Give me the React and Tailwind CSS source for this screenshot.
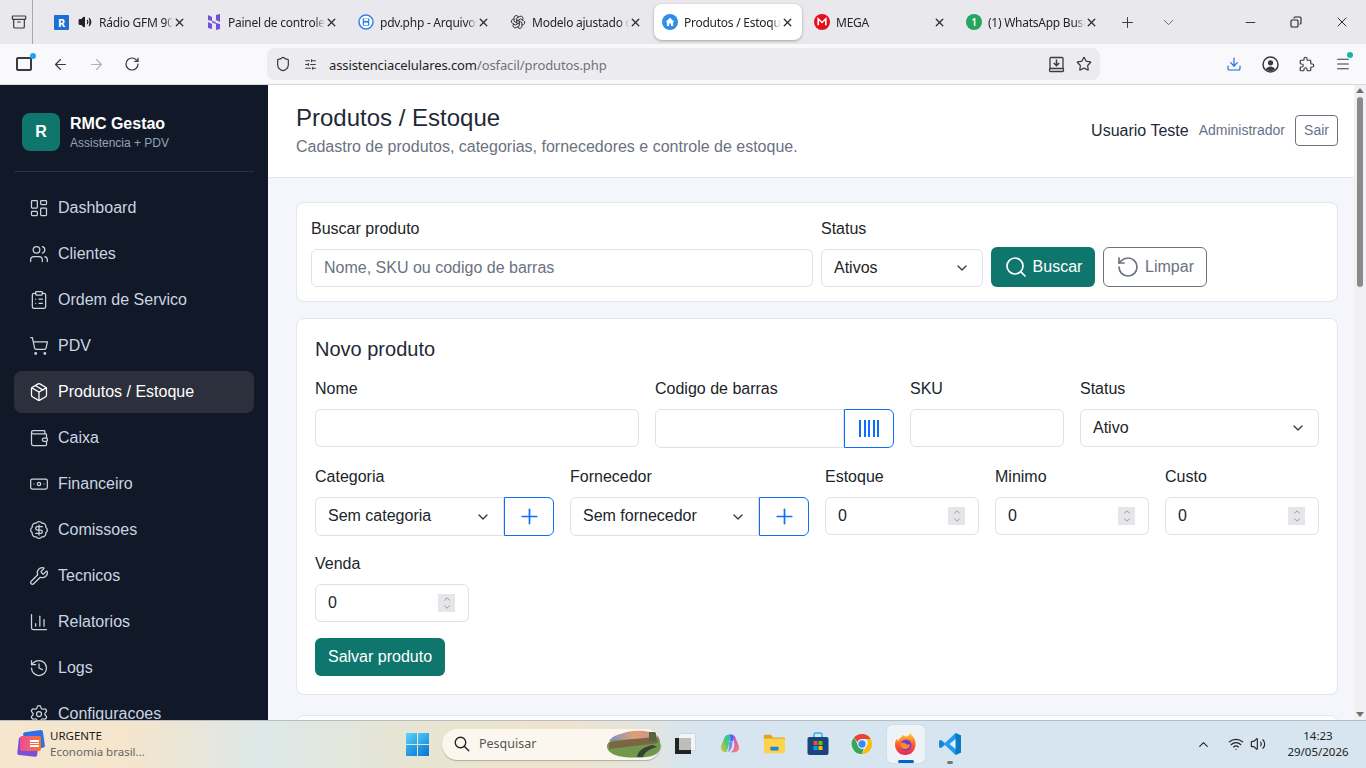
import React from "react";
import { TbChevronDown, TbChevronUp, TbSearch, TbPlus, TbX, TbMinus, TbBrandOpenai, TbPuzzle } from "react-icons/tb";
import { LayoutDashboard, Users, ClipboardList, ShoppingCart, Package, Wallet, Banknote, BadgeDollarSign, Wrench, ChartColumn, History, Settings, ArrowLeft, ArrowRight, RotateCw, Shield, Star, Download, SlidersHorizontal, Menu, Archive, Copy, Wifi, Volume2, ChevronUp, RotateCcw, Search } from "lucide-react";

const nav = [
  ["Dashboard", LayoutDashboard], ["Clientes", Users], ["Ordem de Servico", ClipboardList], ["PDV", ShoppingCart],
  ["Produtos / Estoque", Package, true], ["Caixa", Wallet], ["Financeiro", Banknote], ["Comissoes", BadgeDollarSign],
  ["Tecnicos", Wrench], ["Relatorios", ChartColumn], ["Logs", History], ["Configuracoes", Settings],
];

function RadioIcon() {
  return <div className="w-[15px] h-[15px] bg-[#1d6fd1] flex items-center justify-center text-white text-[11px] font-bold leading-none rounded-[1px]">R</div>;
}
function HostIcon() {
  return <svg width="16" height="16" viewBox="0 0 16 16"><path d="M2 1l4 2v4l-4-1zM10 1l4-1v8l-4-2zM2 8l4 2v5l-4-1zM10 9l4 1v5l-4 1z" fill="#6f52d9" /><path d="M6 6.5l4 1.5v2L6 9z" fill="#8e75e6" /></svg>;
}
function PdvIcon() {
  return <svg width="16" height="16" viewBox="0 0 16 16"><circle cx="8" cy="8" r="7" fill="#fff" stroke="#2f86ea" strokeWidth="1.5" /><rect x="4.7" y="4.3" width="6.6" height="7.4" rx="1" fill="#2f86ea" /><rect x="6" y="4.6" width="4" height="2.2" fill="#fff" /><rect x="6" y="8.6" width="4" height="2.6" fill="#fff" /></svg>;
}
function HomeIcon() {
  return <div className="w-4 h-4 rounded-full bg-[#2e8fe6] flex items-center justify-center"><svg width="10" height="10" viewBox="0 0 10 10"><path d="M5 .8L.6 5h1.3v4h2.2V6.4h1.8V9h2.2V5h1.3z" fill="#fff" /></svg></div>;
}
function MegaIcon() {
  return <svg width="16" height="16" viewBox="0 0 16 16"><circle cx="8" cy="8" r="8" fill="#e4101b" /><path d="M4.2 11.3V4.8l3.8 3.7 3.8-3.7v6.5" fill="none" stroke="#fff" strokeWidth="1.6" /></svg>;
}
function WaIcon() {
  return <div className="w-4 h-4 rounded-full bg-[#25a55f] flex items-center justify-center text-white text-[10px] font-semibold leading-none">1</div>;
}
function SaveToBook() {
  return (
    <svg width="17" height="17" viewBox="0 0 17 17" fill="none" stroke="#3b3b3f" strokeWidth="1.3">
      <path d="M2 13V2.500C2 2 2.500 1.500 3 1.500h11c.5 0 1 .5 1 1V13" />
      <rect x="1.500" y="12.500" width="14" height="3" rx="1" />
      <path d="M8.500 3.500v6M5.800 7l2.700 2.700L11.200 7" strokeWidth="1.500" />
    </svg>
  );
}
function Profile() {
  return (
    <svg width="17" height="17" viewBox="0 0 17 17">
      <circle cx="8.500" cy="8.500" r="7.500" fill="none" stroke="#3b3b3f" strokeWidth="1.500" />
      <circle cx="8.500" cy="6.800" r="2.600" fill="#3b3b3f" />
      <path d="M3.800 13.200c1-2 3-2.800 4.700-2.800s3.700.8 4.700 2.800c-1.200 1.100-2.900 1.800-4.700 1.800s-3.500-.7-4.700-1.800z" fill="#3b3b3f" />
    </svg>
  );
}

const tabs = [
  { icon: <RadioIcon />, speaker: true, text: "Rádio GFM 90.1" },
  { icon: <HostIcon />, text: "Painel de controle" },
  { icon: <PdvIcon />, text: "pdv.php - Arquivos" },
  { icon: <TbBrandOpenai size={16} className="text-[#333]" strokeWidth={1.5} />, text: "Modelo ajustado do" },
  { icon: <HomeIcon />, text: "Produtos / Estoque", active: true },
  { icon: <MegaIcon />, text: "MEGA" },
  { icon: <WaIcon />, text: "(1) WhatsApp Business" },
];

function Tab({ t }) {
  return (
    <div className={t.active ? "w-[148px] mr-[4px] h-9 rounded-[8px] bg-white shadow-[0_1px_3px_rgba(0,0,0,0.3)] flex items-center pl-[8px] pr-[8px] shrink-0" : "w-[152px] h-9 flex items-center pl-[8px] pr-[12px] shrink-0"}>
      <div className={t.speaker ? "flex items-center gap-[9px] w-[45px] shrink-0" : "w-[22px] shrink-0 flex items-center"}>
        {t.icon}
        {t.speaker && <Volume2 size={14} fill="#222" className="text-[#222]" />}
      </div>
      <span className="flex-1 min-w-0 overflow-hidden whitespace-nowrap pt-[1px] text-[12px] tracking-[-0.25px] text-[#26262a] [mask-image:linear-gradient(to_right,black_90%,transparent)]">{t.text}</span>
      <TbX size={13} strokeWidth={2.4} className="text-[#2a2a2e] shrink-0" />
    </div>
  );
}

function BrowserBar() {
  return (
    <div className="font-['Noto_Sans',sans-serif]">
      <div className="h-11 bg-[#e8e8ed] flex items-center">
        <div className="w-[32px] h-11 shrink-0 border-r border-r-[#a8a8ac] box-content flex items-center justify-center">
          <Archive size={16} strokeWidth={1.8} className="text-[#3b3b3f] ml-[6px]" />
        </div>
        <div className="w-[13px] shrink-0" />
        {tabs.map((t) => <Tab key={t.text} t={t} />)}
        <TbPlus size={17} strokeWidth={1.4} className="text-[#3b3b3f] ml-[9px]" />
        <TbChevronDown size={17} strokeWidth={1.2} className="text-[#55555a] ml-[24px]" />
        <div className="flex-1" />
        <TbMinus size={15} strokeWidth={1.4} className="text-[#222] mr-[32px]" />
        <Copy size={12} strokeWidth={2.2} className="text-[#222] mr-[32px] scale-x-[-1]" />
        <TbX size={16} strokeWidth={1.4} className="text-[#222] mr-[16px]" />
      </div>
      <div className="h-[41px] bg-[#f9f9fb] border-b border-b-[#d8d8dc] flex items-center">
        <div className="w-[16px] shrink-0" />
        <div className="relative w-[16px] h-[14px] border-2 border-[#3b3b3f] rounded-[2px] bg-[#f9f9fb] shrink-0">
          <span className="absolute -top-[6px] -right-[6px] w-[6px] h-[6px] rounded-full bg-[#1ea4f0]" />
        </div>
        <ArrowLeft size={17} strokeWidth={1.7} className="text-[#3b3b3f] ml-[20px]" />
        <ArrowRight size={17} strokeWidth={1.7} className="text-[#b4b4b8] ml-[19px]" />
        <RotateCw size={16} strokeWidth={1.8} className="text-[#3b3b3f] ml-[19px]" />
        <div className="ml-[127px] w-[833px] h-8 rounded-[8px] bg-[#ececf0] flex items-center">
          <Shield size={16} strokeWidth={1.8} className="text-[#3b3b3f] ml-2" />
          <SlidersHorizontal size={13} strokeWidth={1.8} className="text-[#3b3b3f] ml-[13px]" />
          <span className="ml-[12px] pt-[3px] text-[13px] tracking-[-0.1px] text-[#1f1f23]">assistenciacelulares.com<span className="text-[#71717a]">/osfacil/produtos.php</span></span>
          <div className="flex-1" />
          <span className="mr-[11px]"><SaveToBook /></span>
          <Star size={16} strokeWidth={1.8} className="text-[#3b3b3f] mr-2" />
        </div>
        <div className="flex-1" />
        <Download size={16} strokeWidth={1.8} className="text-[#1a6fe0] mr-[20px]" />
        <span className="mr-[19px]"><Profile /></span>
        <TbPuzzle size={18} strokeWidth={1.6} className="text-[#3b3b3f] mr-[19px]" />
        <div className="relative mr-[15px]">
          <Menu size={16} strokeWidth={1.6} className="text-[#3b3b3f]" />
          <span className="absolute -top-[4px] -right-[2px] w-[6px] h-[6px] rounded-full bg-[#14b8a6]" />
        </div>
      </div>
    </div>
  );
}

function Sidebar() {
  return (
    <aside className="w-[268px] shrink-0 bg-[#111827] px-[14px] overflow-hidden">
      <div className="flex items-center gap-[10px] pl-2 pt-7 pb-5 border-b border-b-[#2a3140]">
        <div className="w-[38px] h-[38px] rounded-[8px] bg-[#0f766e] flex items-center justify-center text-white text-[16px] font-bold">R</div>
        <div className="h-[38px] pt-[1px]">
          <div className="text-white font-bold text-[16px] leading-[20px]">RMC Gestao</div>
          <div className="text-[#94a3b8] text-[12px] leading-[19px]">Assistencia + PDV</div>
        </div>
      </div>
      <nav className="mt-[15px] flex flex-col gap-1">
        {nav.map(([label, Icon, active]) => (
          <div key={label} className={active ? "h-[42px] shrink-0 rounded-[8px] bg-[#2b303c] text-white flex items-center pl-[15px] gap-[9px] text-[16px]" : "h-[42px] shrink-0 rounded-[8px] text-[#cbd5e1] flex items-center pl-[15px] gap-[9px] text-[16px]"}>
            <Icon size={20} strokeWidth={1.5} />
            <span>{label}</span>
          </div>
        ))}
      </nav>
    </aside>
  );
}

const fieldCls = "w-full h-[38px] rounded-[6px] border border-[#dee2e6] bg-white px-3 text-[16px] text-[#212529] placeholder:text-[#6b7280] outline-none";

function Label({ children }) {
  return <div className="text-[16px] leading-[24px] mb-2 text-[#212529]">{children}</div>;
}
function Select({ value, cls = "h-[38px] rounded-[6px]" }) {
  return (
    <div className="relative w-full">
      <select defaultValue={value} className={`${cls} w-full border border-[#dee2e6] bg-white pl-3 pr-8 text-[16px] text-[#212529] appearance-none outline-none`}>
        <option>{value}</option>
      </select>
      <TbChevronDown size={16} strokeWidth={2} className="absolute right-[13px] top-1/2 -translate-y-1/2 text-[#343a40]" />
    </div>
  );
}
function NumberField() {
  return (
    <div className="relative">
      <input defaultValue="0" className={fieldCls} />
      <div className="absolute right-[14px] top-[10px] w-[17px] h-[18px] bg-[#e6e6ea] flex flex-col items-center justify-center text-[#8c8c90]">
        <TbChevronUp size={10} strokeWidth={2} className="-mb-[1px]" />
        <TbChevronDown size={10} strokeWidth={2} className="-mt-[1px]" />
      </div>
    </div>
  );
}
function AddGroup({ value }) {
  return (
    <div className="flex">
      <Select value={value} cls="h-[39px] pb-[2px] rounded-l-[6px]" />
      <button className="w-[50px] h-[39px] shrink-0 border border-[#0d6efd] rounded-r-[6px] bg-white flex items-center justify-center text-[#0d6efd]">
        <TbPlus size={25} strokeWidth={1.6} />
      </button>
    </div>
  );
}

function Main() {
  return (
    <main className="flex-1 bg-[#f4f6fb] overflow-hidden min-w-0">
      <header className="h-[93px] bg-white border-b border-b-[#e2e6ee] flex items-center justify-between pl-7 pr-4">
        <div className="pb-[2px]">
          <div className="text-[24px] leading-[32px] text-[#1f2937]">Produtos / Estoque</div>
          <div className="mt-[1px] text-[16px] leading-[24px] text-[#6b7280]">Cadastro de produtos, categorias, fornecedores e controle de estoque.</div>
        </div>
        <div className="flex items-center pb-[1px]">
          <span className="text-[16px] text-[#1f2937] mr-[10px]">Usuario Teste</span>
          <span className="text-[14px] text-[#64748b] mr-[10px]">Administrador</span>
          <button className="w-[43px] h-[31px] border border-[#6b7280] rounded-[4px] text-[14px] text-[#64748b] bg-white">Sair</button>
        </div>
      </header>
      <div className="pt-6 pl-7 pr-4 flex flex-col gap-4">
        <section className="bg-white border border-[#e2e6f0] rounded-[8px] px-[14px] pt-[14px] pb-[14px] flex items-end gap-2">
          <div className="w-[502px]">
            <Label>Buscar produto</Label>
            <input placeholder="Nome, SKU ou codigo de barras" className={fieldCls} />
          </div>
          <div className="w-[162px]">
            <Label>Status</Label>
            <Select value="Ativos" />
          </div>
          <button className="w-[104px] h-10 rounded-[6px] bg-[#0f766e] text-white text-[16px] flex items-center justify-center gap-[5px]">
            <Search size={24} strokeWidth={1.7} />
            Buscar
          </button>
          <button className="w-[104px] h-10 rounded-[6px] border border-[#6b7280] bg-white text-[#6b7280] text-[16px] flex items-center justify-center gap-[5px]">
            <RotateCcw size={24} strokeWidth={1.7} />
            Limpar
          </button>
        </section>

        <section className="bg-white border border-[#e2e6f0] rounded-[8px] p-[18px]">
          <div className="text-[20px] leading-[24px] text-[#1f2937] mb-4">Novo produto</div>
          <div className="grid grid-cols-12 gap-x-4 gap-y-4">
            <div className="col-span-4"><Label>Nome</Label><input className={fieldCls} /></div>
            <div className="col-span-3">
              <Label>Codigo de barras</Label>
              <div className="flex h-10 items-start">
                <input className="flex-1 min-w-0 h-[39px] rounded-l-[6px] border border-[#dee2e6] bg-white px-3 outline-none" />
                <button className="w-[50px] h-[39px] shrink-0 border border-[#0d6efd] rounded-r-[6px] bg-white flex items-center justify-center gap-[2.5px]">
                  <span className="w-[2px] h-[17px] bg-[#0d6efd]" /><span className="w-[2px] h-[17px] bg-[#0d6efd]" /><span className="w-[2px] h-[17px] bg-[#0d6efd]" /><span className="w-[2px] h-[17px] bg-[#0d6efd]" /><span className="w-[2px] h-[17px] bg-[#0d6efd]" />
                </button>
              </div>
            </div>
            <div className="col-span-2"><Label>SKU</Label><input className={fieldCls} /></div>
            <div className="col-span-3"><Label>Status</Label><Select value="Ativo" /></div>

            <div className="col-span-3"><Label>Categoria</Label><AddGroup value="Sem categoria" /></div>
            <div className="col-span-3"><Label>Fornecedor</Label><AddGroup value="Sem fornecedor" /></div>
            <div className="col-span-2"><Label>Estoque</Label><NumberField /></div>
            <div className="col-span-2"><Label>Minimo</Label><NumberField /></div>
            <div className="col-span-2"><Label>Custo</Label><NumberField /></div>

            <div className="col-span-2"><Label>Venda</Label><NumberField /></div>
          </div>
          <button className="mt-4 block w-[130px] h-[38px] rounded-[6px] bg-[#0f766e] text-white text-[16px]">Salvar produto</button>
        </section>

        <section className="h-20 bg-white border border-[#e2e6f0] rounded-[8px] mt-1" />
      </div>
    </main>
  );
}

function Scrollbar() {
  return (
    <div className="w-3 shrink-0 bg-[#f1f1f3] flex flex-col items-center">
      <div className="mt-[3px] w-0 h-0 border-x-[4px] border-x-transparent border-b-[5px] border-b-[#6f6f6f]" />
      <div className="mt-[4px] w-[6px] h-[190px] rounded-full bg-[#8a8a8a]" />
      <div className="flex-1" />
      <div className="mb-[3px] w-0 h-0 border-x-[4px] border-x-transparent border-t-[5px] border-t-[#6f6f6f]" />
    </div>
  );
}

function WinLogo() {
  return (
    <div className="grid grid-cols-2 gap-[1px] w-[23px] h-[23px]">
      <div className="bg-gradient-to-br from-[#5fd3f8] to-[#25a4ea]" /><div className="bg-gradient-to-br from-[#4cc4f5] to-[#1d95e3]" />
      <div className="bg-gradient-to-br from-[#35aef0] to-[#1585dc]" /><div className="bg-gradient-to-br from-[#2a9fe9] to-[#0f73d0]" />
    </div>
  );
}
function Landscape() {
  return (
    <svg width="54" height="28" viewBox="0 0 54 28">
      <defs><linearGradient id="sky" x1="0" y1="0" x2="1" y2="0"><stop offset="0" stopColor="#7a8fd0" /><stop offset=".5" stopColor="#e0a070" /><stop offset="1" stopColor="#c48aa0" /></linearGradient></defs>
      <path d="M2 11C6 5 14 4 20 2c10-2 24-2 32 5l1 5-24 2z" fill="url(#sky)" />
      <path d="M0 16c0-3 3-5 8-6l44-2 2 8c0 6-6 10-14 11-10 1-24 1-32-2-5-2-8-5-8-9z" fill="#6f9a4e" />
      <path d="M2 12l24-3 24-2 1 6-24 3-25 3z" fill="#7c6542" />
      <path d="M30 27c1-6 6-10 16-12l4 2c-8 2-12 5-14 10z" fill="#37422f" />
      <rect x="42" y="2" width="7" height="9" fill="#55653f" />
    </svg>
  );
}
function TaskView() {
  return (
    <div className="relative w-5 h-5">
      <div className="absolute right-0 top-0 w-[16px] h-[16px] bg-[#f4f4f4] shadow-[0_0_1px_rgba(0,0,0,0.3)]" />
      <div className="absolute left-0 bottom-0 w-[16px] h-[16px] bg-[#222]" />
      <div className="absolute right-[4px] top-[4px] w-[12px] h-[12px] bg-[#bdbdbd]" />
    </div>
  );
}
function Copilot() {
  return (
    <svg width="24" height="24" viewBox="0 0 24 24">
      <defs>
        <linearGradient id="cpa" x1="0" y1="0" x2="1" y2="1"><stop offset="0" stopColor="#1f7fe8" /><stop offset="1" stopColor="#4a5ee8" /></linearGradient>
        <linearGradient id="cpb" x1="0" y1="1" x2="1" y2="0"><stop offset="0" stopColor="#f5c23a" /><stop offset=".55" stopColor="#4cc96f" /><stop offset="1" stopColor="#2fb7e8" /></linearGradient>
        <linearGradient id="cpc" x1="0" y1="0" x2="1" y2="1"><stop offset="0" stopColor="#a45ce8" /><stop offset=".6" stopColor="#e85fa8" /><stop offset="1" stopColor="#f59a5a" /></linearGradient>
      </defs>
      <path d="M8 21c-4 0-6-2-6-5 0-2 1-4 2-6l2-5c1-2 2-3 5-3 1 0 2 .6 2 2l-2 6-1 6z" fill="url(#cpb)" />
      <path d="M11 2h3c2 0 3 1 4 3l2 5c1 2 2 4 2 6 0 3-2 5-5 5h-5c2 0 4-2 4-4l1-5-2-7c-.5-2-2-3-4-3z" fill="url(#cpc)" />
      <path d="M13 1.500c2 0 3 2 3 4l-1 3-3 1 .5-4c.1-1.500-.3-3-1.500-3.500.5-.3 1-.5 2-.5z" fill="url(#cpa)" />
      <path d="M11 10l4-1-1 6c-.5 3-3 6-6 6h1c2-2 2-5 2-11z" fill="#3f6fe8" opacity=".7" />
    </svg>
  );
}
function Folder() {
  return (
    <svg width="24" height="22" viewBox="0 0 24 22">
      <path d="M1 2.500C1 1.700 1.700 1 2.500 1h6l2.500 3h11.500c.8 0 1.500.7 1.500 1.500V8H1z" fill="#e0a21b" />
      <rect x="1" y="5" width="23" height="16" rx="1.500" fill="#fcd34d" />
      <rect x="8" y="14" width="9" height="4" rx="1" fill="#1c86d8" />
    </svg>
  );
}
function Store() {
  return (
    <svg width="22" height="24" viewBox="0 0 22 24">
      <path d="M7 5V2.500C7 1.700 7.700 1 8.500 1h5c.8 0 1.500.7 1.500 1.500V5" fill="none" stroke="#33b1e8" strokeWidth="1.500" />
      <rect x="0.500" y="5" width="21" height="18" rx="2" fill="#17457d" />
      <rect x="6.500" y="9" width="4" height="4" fill="#f25022" /><rect x="11.500" y="9" width="4" height="4" fill="#7fba00" />
      <rect x="6.500" y="14" width="4" height="4" fill="#00a4ef" /><rect x="11.500" y="14" width="4" height="4" fill="#ffb900" />
    </svg>
  );
}
function Chrome() {
  return (
    <svg width="24" height="24" viewBox="0 0 24 24">
      <path d="M12 1a11 11 0 0 1 9.500 5.500H12a5.500 5.500 0 0 0-5 3.200L3.300 5A11 11 0 0 1 12 1z" fill="#ea4335" />
      <path d="M21.500 6.500A11 11 0 0 1 12 23l4.700-8.300a5.500 5.500 0 0 0 .1-8.200z" fill="#fbbc04" />
      <path d="M12 23A11 11 0 0 1 3.300 5L7.800 13.500a5.500 5.500 0 0 0 6 3.800z" fill="#34a853" />
      <circle cx="12" cy="12" r="5" fill="#fff" /><circle cx="12" cy="12" r="4" fill="#4285f4" />
    </svg>
  );
}
function Firefox() {
  return (
    <svg width="24" height="24" viewBox="0 0 24 24">
      <defs><linearGradient id="ffa" x1="0" y1="0" x2="0" y2="1"><stop offset="0" stopColor="#ffcb2e" /><stop offset=".55" stopColor="#ff5a2c" /><stop offset="1" stopColor="#e8235f" /></linearGradient></defs>
      <path d="M16 1c1 2 4 4 5 7 2 6-1 15-9.500 15C5 23 1 18 1 12.500 1 10 2 7.500 3 6.500c0 1 .5 2 1 2.500C5 6 8 5 9 3c1 1 2 1.500 3 1.500C14 4.500 15.500 3 16 1z" fill="url(#ffa)" />
      <circle cx="12" cy="13" r="5.500" fill="#6d3fd1" />
      <path d="M6 12c2-2 5-1 6 0s3 1 4 0c0 3-2 5-5 5-2.500 0-4.500-2-5-5z" fill="#ff8a2c" />
    </svg>
  );
}
function VsCode() {
  return (
    <svg width="24" height="24" viewBox="0 0 24 24">
      <path d="M17.500 1L23 3.500v17L17.500 23 7 13l-4 3-2-1V9l2-1 4 3z" fill="#1f9cf0" />
      <path d="M17.500 1L23 3.500v17L17.500 23z" fill="#0a7bc8" />
      <path d="M17.500 7l-6 5 6 5z" fill="#e6f0f6" />
      <path d="M1 9l2-1 3.500 4L3 16l-2-1z" fill="#1a86d8" />
    </svg>
  );
}

function Taskbar() {
  return (
    <footer className="h-12 shrink-0 pb-[1px] border-t border-t-[#b9bcc0] bg-[linear-gradient(to_right,#f5e6cf_0px,#f4e5cc_130px,#dde8e8_260px,#e6e5d4_400px,#f0e3cd_560px,#e4e5dc_640px,#d6e5ef_690px,#d6e5ef_100%)] flex items-center font-['Noto_Sans',sans-serif]">
      <div className="ml-[18px] w-[26px] h-[26px] relative shrink-0">
        <div className="absolute right-0 top-0 w-[20px] h-[18px] bg-[#2f6fe8] rounded-[2px] rotate-[-8deg]" />
        <div className="absolute left-0 bottom-[1px] w-[20px] h-[18px] bg-[#7c4fd8] rounded-[2px] rotate-[6deg]" />
        <div className="absolute left-[2px] top-[5px] w-[21px] h-[15px] bg-gradient-to-r from-[#ec4899] to-[#f97316] rounded-[2px] flex flex-col items-end justify-center gap-[1px] pr-[2px]">
          <span className="w-[9px] h-[1.5px] bg-white" /><span className="w-[9px] h-[1.5px] bg-white" /><span className="w-[9px] h-[1.5px] bg-white" />
        </div>
      </div>
      <div className="ml-[6px] w-[356px] shrink-0 pb-[1px]">
        <div className="text-[11.5px] leading-[16px] text-[#1c1c1c]">URGENTE</div>
        <div className="text-[11.5px] leading-[16px] text-[#666]">Economia brasil...</div>
      </div>
      <WinLogo />
      <div className="ml-[13px] w-[219px] h-[31px] rounded-full bg-[#fbf7ef] shadow-[0_1px_1px_rgba(0,0,0,0.25)] flex items-center overflow-hidden shrink-0">
        <TbSearch size={18} strokeWidth={1.8} className="ml-[11px] text-[#222]" />
        <span className="ml-[8px] text-[12.5px] text-[#555] flex-1">Pesquisar</span>
        <Landscape />
      </div>
      <div className="ml-[14px] w-[20px] flex justify-center shrink-0"><TaskView /></div>
      <div className="ml-[24px] w-[22px] flex justify-center shrink-0"><Copilot /></div>
      <div className="ml-[22px] w-[22px] flex justify-center shrink-0"><Folder /></div>
      <div className="ml-[22px] w-[22px] flex justify-center shrink-0"><Store /></div>
      <div className="ml-[22px] w-[22px] flex justify-center shrink-0"><Chrome /></div>
      <div className="relative ml-[14px] w-[38px] h-[38px] rounded-[5px] bg-[#eef3f8] shadow-[0_0_1px_rgba(0,0,0,0.25)] flex items-center justify-center shrink-0">
        <Firefox />
        <span className="absolute bottom-0 left-[11px] w-[16px] h-[3px] rounded-full bg-[#0067c0]" />
      </div>
      <div className="relative ml-[13px] w-[24px] h-[24px] shrink-0">
        <VsCode />
        <span className="absolute -bottom-[8px] left-[9px] w-[6px] h-[3px] rounded-full bg-[#777]" />
      </div>
      <div className="flex-1" />
      <ChevronUp size={15} strokeWidth={1.8} className="text-[#222] mr-[17px]" />
      <Wifi size={16} strokeWidth={1.9} className="text-[#222] mr-[6px]" />
      <Volume2 size={16} strokeWidth={1.7} className="text-[#222] mr-[19px]" />
      <div className="w-[66px] mr-[15px] pb-[1px] text-center text-[11.5px] leading-[16px] text-[#222]">
        <div>14:23</div>
        <div>29/05/2026</div>
      </div>
    </footer>
  );
}

export default function App() {
  return (
    <div className="h-screen w-[1366px] flex flex-col overflow-hidden font-['Liberation_Sans',Arial,sans-serif]">
      <BrowserBar />
      <div className="flex-1 flex min-h-0">
        <Sidebar />
        <Main />
        <Scrollbar />
      </div>
      <Taskbar />
    </div>
  );
}
